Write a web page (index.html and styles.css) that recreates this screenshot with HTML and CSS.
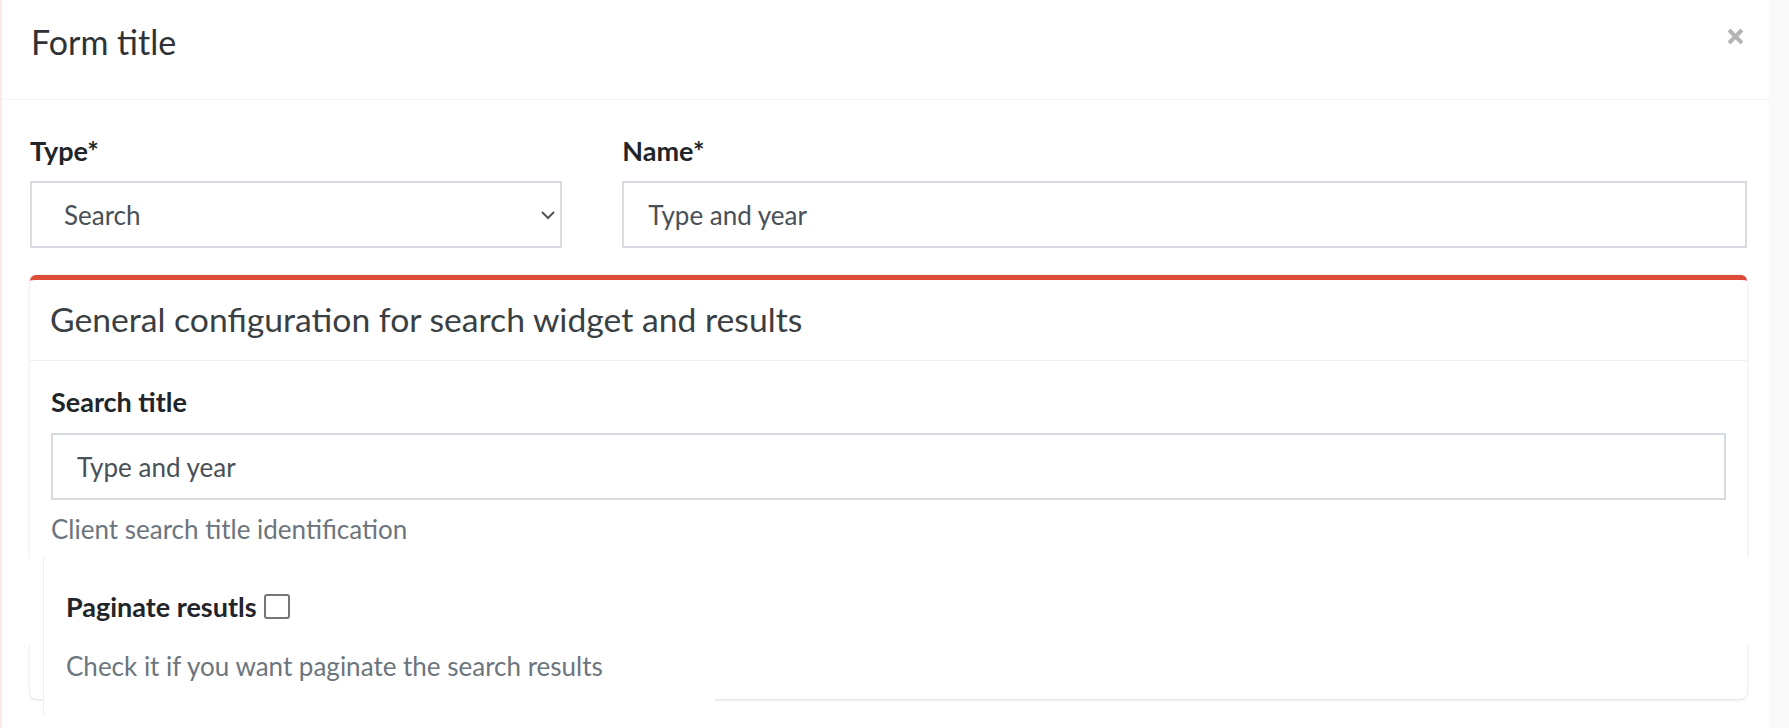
FILE: index.html
```html
<!DOCTYPE html>
<html lang="en">
<head>
<meta charset="utf-8">
<title>Form title</title>
<link rel="stylesheet" href="styles.css">
</head>
<body>
<div class="modal">
  <div class="modal-header">
    <h4 class="modal-title">Form title</h4>
    <button class="close" type="button" aria-label="Close">
      <svg width="17" height="17" viewBox="0 0 17 17"><path d="M2 2 L15 15 M15 2 L2 15" stroke="#b4b4b4" stroke-width="4" fill="none"/></svg>
    </button>
  </div>
  <div class="modal-body">
    <div class="row">
      <div class="col">
        <label class="label">Type*</label>
        <div class="select">
          <span>Search</span>
          <svg width="16" height="10" viewBox="0 0 16 10"><path d="M2 2 L8 8 L14 2" stroke="#555" stroke-width="2" fill="none"/></svg>
        </div>
      </div>
      <div class="col">
        <label class="label">Name*</label>
        <input class="form-control" type="text" value="Type and year">
      </div>
    </div>

    <div class="card">
      <div class="card-header">
        <h3 class="card-title">General configuration for search widget and results</h3>
      </div>
      <div class="card-body">
        <div class="form-group">
          <label class="label">Search title</label>
          <input class="form-control" type="text" value="Type and year">
          <small class="help">Client search title identification</small>
        </div>
        <div class="form-group ghost">
          <div class="check-row">
            <span class="label-inline">Paginate resutls</span>
            <input class="check" type="checkbox">
          </div>
          <small class="help ghost-help">Check it if you want paginate the search results</small>
        </div>
      </div>
    </div>
  </div>
  <div class="band"></div>
</div>
</body>
</html>
```

FILE: styles.css
```css
* { box-sizing: border-box; }

html, body {
  margin: 0;
  padding: 0;
  background: #fafafa;
  font-family: Lato, "Noto Sans", sans-serif;
  color: #212529;
}

.modal {
  position: relative;
  width: 1769px;
  height: 728px;
  background: #ffffff;
  border-left: 2px solid #fce9e7;
  overflow: hidden;
}

.modal-header {
  display: flex;
  justify-content: space-between;
  align-items: flex-start;
  height: 100px;
  padding: 22px 25px 0 29px;
  border-bottom: 1px solid #f3f3f3;
}

.modal-title {
  margin: 0;
  font-size: 34px;
  line-height: 40px;
  font-weight: 400;
  color: #2f3337;
}

.close {
  margin-top: 6px;
  padding: 0;
  border: 0;
  background: transparent;
  line-height: 0;
}

.modal-body {
  padding: 31px 22px 0 28px;
}

.row {
  display: grid;
  grid-template-columns: calc((100% + 60px) / 3 - 60px) 1fr;
  column-gap: 60px;
}

.label {
  display: block;
  font-size: 27px;
  line-height: 39px;
  font-weight: 700;
  color: #212529;
  margin-bottom: 11px;
}

.select {
  display: flex;
  align-items: center;
  justify-content: space-between;
  height: 67px;
  padding: 0 4px 0 32px;
  border: 2px solid #d6dae1;
  font-size: 26px;
  color: #495057;
}

.form-control {
  display: block;
  width: 100%;
  height: 67px;
  padding: 0 24px;
  border: 2px solid #d6dae1;
  border-radius: 0;
  font-family: inherit;
  font-size: 26px;
  color: #495057;
  background: #fff;
  outline: none;
}

.card {
  margin-top: 27px;
  background: #fff;
  border-top: 5px solid #dd4b39;
  border-radius: 6px;
  box-shadow: 0 0 1px rgba(0,0,0,0.14), 0 1px 3px rgba(0,0,0,0.12);
}

.card-header {
  padding: 20px 20px 22px 20px;
  border-bottom: 1px solid #f0f0f0;
}

.card-title {
  margin: 0;
  font-size: 33.7px;
  line-height: 38px;
  font-weight: 400;
  color: #3a3f44;
}

.card-body {
  padding: 21px 21px 20px 21px;
}

.card-body .label {
  margin-bottom: 12px;
}

.help {
  display: block;
  margin-top: 12px;
  font-size: 26px;
  line-height: 34px;
  color: #6c757d;
}

.ghost {
  position: relative;
  z-index: 2;
  width: 672px;
  margin: 10px 0 -35px -8px;
  padding: 31px 22px 31px 22px;
  background: #fff;
  border-left: 1px solid #eeeeee;
}

.check-row {
  display: flex;
  align-items: center;
  height: 39px;
  gap: 7px;
}

.label-inline {
  font-size: 27px;
  line-height: 39px;
  font-weight: 700;
  color: #212529;
}

.check {
  appearance: none;
  -webkit-appearance: none;
  width: 26px;
  height: 25px;
  margin: 0;
  border: 2px solid #767676;
  border-radius: 3px;
  background: #fff;
}

.ghost-help {
  margin-top: 23px;
}

.band {
  position: absolute;
  z-index: 1;
  left: -2px;
  right: 0;
  top: 558px;
  height: 87px;
  background: #fff;
}
```
